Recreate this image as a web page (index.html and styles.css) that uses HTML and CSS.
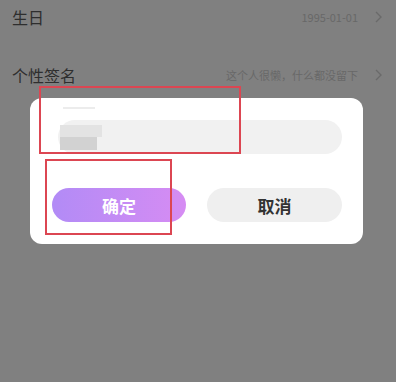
FILE: index.html
```html
<!DOCTYPE html>
<html lang="zh">
<head>
<meta charset="utf-8">
<link rel="stylesheet" href="styles.css">
</head>
<body>
<div class="page">
  <div class="row">
    <span class="title">生日</span>
    <span class="right">
      <span class="value">1995-01-01</span>
      <svg class="chev" width="7" height="12" viewBox="0 0 7 12"><path d="M1 1 L6 6 L1 11" fill="none" stroke="#6a6a6a" stroke-width="1.4"/></svg>
    </span>
  </div>
  <div class="row">
    <span class="title">个性签名</span>
    <span class="right">
      <span class="value">这个人很懒，什么都没留下</span>
      <svg class="chev" width="7" height="12" viewBox="0 0 7 12"><path d="M1 1 L6 6 L1 11" fill="none" stroke="#6a6a6a" stroke-width="1.4"/></svg>
    </span>
  </div>
</div>

<div class="dialog">
  <div class="label-line"></div>
  <div class="input">
    <div class="blur">
      <div class="blur-top"></div>
      <div class="blur-bottom"></div>
    </div>
  </div>
  <div class="buttons">
    <div class="btn confirm">确定</div>
    <div class="btn cancel">取消</div>
  </div>
</div>

<div class="mark mark-input"></div>
<div class="mark mark-btn"></div>
</body>
</html>
```

FILE: styles.css
```css
html, body {
  margin: 0;
  padding: 0;
}
body {
  width: 396px;
  height: 382px;
  background: #808080;
  font-family: "Noto Sans CJK SC", "Noto Sans", sans-serif;
  overflow: hidden;
  position: relative;
}
.page {
  display: flex;
  flex-direction: column;
  gap: 24px;
  padding: 0 14px 0 12px;
}
.row {
  height: 34px;
  display: flex;
  align-items: center;
  justify-content: space-between;
}
.title {
  font-size: 16px;
  color: #2e2e2e;
  line-height: 1;
}
.right {
  display: flex;
  align-items: center;
  gap: 17px;
}
.value {
  font-size: 11px;
  color: #686868;
  line-height: 1;
}
.chev {
  display: block;
}
.dialog {
  position: absolute;
  left: 30px;
  top: 98px;
  width: 333px;
  height: 146px;
  box-sizing: border-box;
  background: #ffffff;
  border-radius: 12px;
  padding: 9px 21px 0 22px;
  display: flex;
  flex-direction: column;
}
.label-line {
  margin-left: 11px;
  width: 32px;
  height: 2px;
  background: #ececec;
}
.input {
  margin-top: 11px;
  margin-left: 6px;
  height: 34px;
  border-radius: 17px;
  background: #f1f1f1;
  display: flex;
  align-items: center;
}
.blur {
  margin-left: 2px;
  display: flex;
  flex-direction: column;
}
.blur-top {
  width: 42px;
  height: 12px;
  background: #e3e3e3;
}
.blur-bottom {
  width: 37px;
  height: 13px;
  background: #d2d2d2;
}
.buttons {
  margin-top: 34px;
  display: flex;
  gap: 21px;
}
.btn {
  height: 34px;
  border-radius: 17px;
  display: flex;
  align-items: center;
  justify-content: center;
  font-size: 17px;
  font-weight: 700;
}
.confirm {
  width: 134px;
  background: linear-gradient(90deg, #b28bf6, #d68cf3);
  color: #ffffff;
}
.cancel {
  width: 135px;
  background: #efefef;
  color: #333333;
}
.mark {
  position: absolute;
  border: 2px solid #dc4652;
  box-sizing: border-box;
}
.mark-input {
  left: 39px;
  top: 86px;
  width: 202px;
  height: 68px;
}
.mark-btn {
  left: 45px;
  top: 159px;
  width: 127px;
  height: 76px;
}
```
